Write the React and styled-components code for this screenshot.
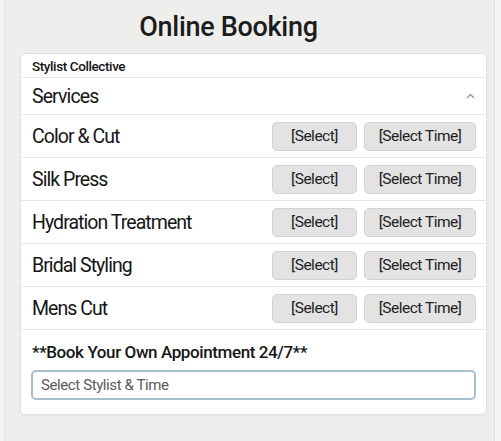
import React from 'react';
import styled, { createGlobalStyle } from 'styled-components';

const GlobalStyle = createGlobalStyle`
  html, body {
    margin: 0;
    padding: 0;
    background: #f5f5f4;
    font-family: Roboto, "Noto Sans", "Liberation Sans", sans-serif;
    color: #161616;
  }
`;

const Panel = styled.div`
  box-sizing: border-box;
  width: 491px;
  height: 441px;
  margin: 0 4px;
  background: #eeeeed;
  border-left: 1px solid #e1e1e0;
  border-right: 1px solid #e1e1e0;
  display: flex;
  flex-direction: column;
`;

const Title = styled.h1`
  margin: 0;
  height: 53px;
  display: flex;
  align-items: center;
  justify-content: center;
  padding-right: 42px;
  font-size: 27px;
  font-weight: 500;
  letter-spacing: -0.3px;
  color: #1c1c1c;
`;

const Card = styled.div`
  margin: 0 7px 0 15px;
  background: #fff;
  border: 1px solid #e0e0e0;
  border-radius: 5px;
  box-shadow: 0 1px 2px rgba(0, 0, 0, 0.04);
`;

const CardHeader = styled.div`
  height: 23px;
  display: flex;
  align-items: center;
  padding: 0 11px;
  font-size: 13.5px;
  font-weight: 500;
  letter-spacing: -0.4px;
  border-bottom: 1px solid #e6e6e6;
`;

const SectionHead = styled.div`
  height: 36px;
  display: flex;
  align-items: center;
  justify-content: space-between;
  padding: 0 11px 0 11px;
  font-size: 19.5px;
  letter-spacing: -0.9px;
  border-bottom: 1px solid #e6e6e6;
`;

const Row = styled.div`
  height: 42px;
  display: flex;
  align-items: center;
  padding: 0 10px 0 11px;
  border-bottom: 1px solid #e6e6e6;
`;

const Label = styled.span`
  flex: 1;
  font-size: 19.5px;
  letter-spacing: -0.95px;
`;

const Button = styled.button`
  box-sizing: border-box;
  height: 29px;
  width: ${p => p.$w}px;
  margin-left: 7px;
  border: 1px solid #d2d2d2;
  border-radius: 5px;
  background: #e3e3e3;
  font-family: inherit;
  font-size: 15.5px;
  letter-spacing: -0.5px;
  color: #222;
  padding: 0;
`;

const Footer = styled.div`
  padding: 12px 10px 14px 10px;
`;

const FooterLabel = styled.div`
  font-size: 17px;
  font-weight: 500;
  letter-spacing: -0.4px;
  margin: 0 0 8px 1px;
`;

const Input = styled.input`
  box-sizing: border-box;
  width: 100%;
  height: 30px;
  border: 2px solid #a7c0ce;
  border-radius: 5px;
  padding: 0 8px;
  font-family: inherit;
  font-size: 15px;
  letter-spacing: -0.4px;
  background: #fff;
  &::placeholder {
    color: #5a5a5a;
  }
`;

const services = ['Color & Cut', 'Silk Press', 'Hydration Treatment', 'Bridal Styling', 'Mens Cut'];

export default function App() {
  return (
    <>
      <GlobalStyle />
      <Panel>
        <Title>Online Booking</Title>
        <Card>
          <CardHeader>Stylist Collective</CardHeader>
          <SectionHead>
            Services
            <svg width="9" height="6" viewBox="0 0 9 6">
              <path d="M1 5 L4.5 1.5 L8 5" stroke="#9a9a9a" strokeWidth="1.3" fill="none" />
            </svg>
          </SectionHead>
          {services.map(s => (
            <Row key={s}>
              <Label>{s}</Label>
              <Button $w={85}>[Select]</Button>
              <Button $w={112}>[Select Time]</Button>
            </Row>
          ))}
          <Footer>
            <FooterLabel>**Book Your Own Appointment 24/7**</FooterLabel>
            <Input placeholder="Select Stylist & Time" />
          </Footer>
        </Card>
      </Panel>
    </>
  );
}
